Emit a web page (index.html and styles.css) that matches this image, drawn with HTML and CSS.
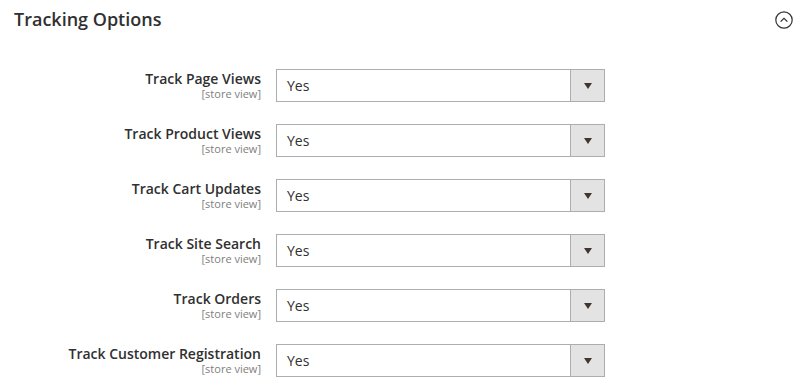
FILE: index.html
```html
<!DOCTYPE html>
<html lang="en">
<head>
    <meta charset="UTF-8">
    <title>Tracking Options</title>
    <link rel="stylesheet" href="styles.css">
</head>
<body>
    <div class="section">
        <div class="section-header">
            <h2>Tracking Options</h2>
            <span class="toggle">
                <svg width="18" height="18" viewBox="0 0 18 18">
                    <circle cx="9" cy="9" r="8.2" fill="none" stroke="#333" stroke-width="1.2"/>
                    <path d="M5.6 10.6 L9 7.3 L12.4 10.6" fill="none" stroke="#333" stroke-width="1.3"/>
                </svg>
            </span>
        </div>

        <div class="fields">
            <div class="field">
                <label>Track Page Views<span class="scope">[store view]</span></label>
                <div class="select"><span>Yes</span><i class="arrow"></i></div>
            </div>
            <div class="field">
                <label>Track Product Views<span class="scope">[store view]</span></label>
                <div class="select"><span>Yes</span><i class="arrow"></i></div>
            </div>
            <div class="field">
                <label>Track Cart Updates<span class="scope">[store view]</span></label>
                <div class="select"><span>Yes</span><i class="arrow"></i></div>
            </div>
            <div class="field">
                <label>Track Site Search<span class="scope">[store view]</span></label>
                <div class="select"><span>Yes</span><i class="arrow"></i></div>
            </div>
            <div class="field">
                <label>Track Orders<span class="scope">[store view]</span></label>
                <div class="select"><span>Yes</span><i class="arrow"></i></div>
            </div>
            <div class="field">
                <label>Track Customer Registration<span class="scope">[store view]</span></label>
                <div class="select"><span>Yes</span><i class="arrow"></i></div>
            </div>
        </div>
    </div>
</body>
</html>
```

FILE: styles.css
```css
* {
    margin: 0;
    padding: 0;
    box-sizing: border-box;
}

body {
    background: #fff;
    font-family: "Open Sans", sans-serif;
    color: #303030;
}

.section-header {
    display: flex;
    justify-content: space-between;
    align-items: center;
    padding: 4px 16px 0 14px;
    height: 34px;
}

.section-header h2 {
    font-size: 18px;
    font-weight: 600;
    color: #303030;
}

.toggle {
    display: flex;
    margin-top: 2px;
}

.fields {
    display: flex;
    flex-direction: column;
    gap: 22px;
    padding-top: 35px;
}

.field {
    display: grid;
    grid-template-columns: 261px 329px;
    column-gap: 15px;
    align-items: start;
}

.field label {
    display: flex;
    flex-direction: column;
    align-items: flex-end;
    text-align: right;
    font-size: 14px;
    font-weight: 600;
    line-height: 18px;
    padding-top: 1px;
}

.scope {
    font-size: 11px;
    font-weight: 400;
    color: #808080;
    line-height: 12px;
}

.select {
    display: flex;
    align-items: center;
    justify-content: space-between;
    height: 33px;
    border: 1px solid #adadad;
    font-size: 14px;
    padding-left: 10px;
}

.arrow {
    display: flex;
    align-items: center;
    justify-content: center;
    width: 34px;
    height: 100%;
    background: #e3e3e3;
    border-left: 1px solid #adadad;
}

.arrow::after {
    content: '';
    border-left: 4px solid transparent;
    border-right: 4px solid transparent;
    border-top: 6px solid #41362f;
}
```
